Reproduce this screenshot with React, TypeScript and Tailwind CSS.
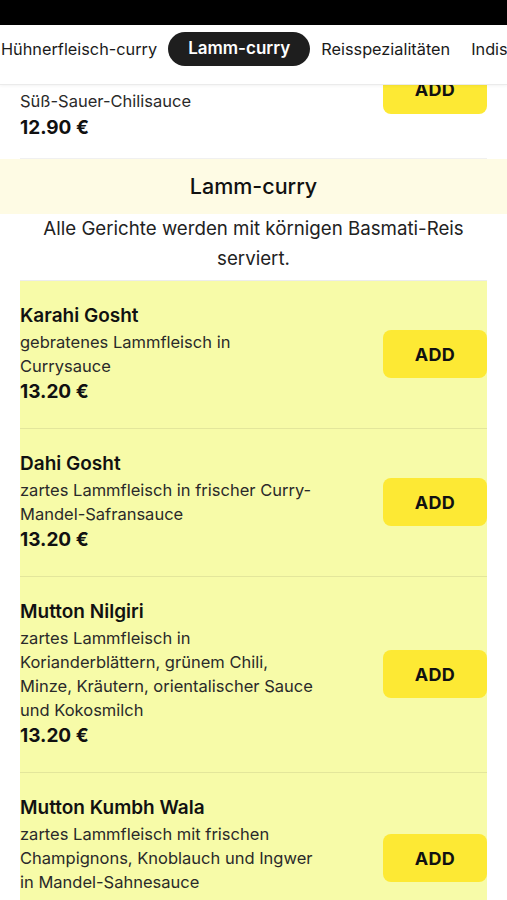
import React from 'react';

interface Dish {
    name: string;
    description: string;
    price: string;
}

const tabs = ['Hühnerfleisch-curry', 'Lamm-curry', 'Reisspezialitäten', 'Indische Brote'];

const dishes: Dish[] = [
    { name: 'Karahi Gosht', description: 'gebratenes Lammfleisch in Currysauce', price: '13.20 €' },
    { name: 'Dahi Gosht', description: 'zartes Lammfleisch in frischer Curry-Mandel-Safransauce', price: '13.20 €' },
    {
        name: 'Mutton Nilgiri',
        description: 'zartes Lammfleisch in Korianderblättern, grünem Chili, Minze, Kräutern, orientalischer Sauce und Kokosmilch',
        price: '13.20 €'
    },
    {
        name: 'Mutton Kumbh Wala',
        description: 'zartes Lammfleisch mit frischen Champignons, Knoblauch und Ingwer in Mandel-Sahnesauce',
        price: '13.20 €'
    }
];

const AddButton: React.FC = () => (
    <button className="w-[104px] h-[48px] shrink-0 rounded-[8px] bg-[#fde934] text-[18px] font-bold text-[#111] tracking-[0.3px]">
        ADD
    </button>
);

const DishRow: React.FC<{ dish: Dish }> = ({ dish }) => (
    <div className="flex items-center justify-between pt-[21px] pb-[22px] border-b border-[#e3e69b]">
        <div className="flex flex-col w-[300px]">
            <span className="text-[19px] font-semibold leading-[28px] text-[#111]">{dish.name}</span>
            <span className="text-[16.5px] leading-[24px] text-[#2a2a2a]">{dish.description}</span>
            <span className="text-[19px] font-bold leading-[28px] text-[#111]">{dish.price}</span>
        </div>
        <AddButton />
    </div>
);

export default function App() {
    return (
        <div className="w-[507px] h-[900px] overflow-hidden bg-white flex flex-col font-['Inter','Liberation_Sans',sans-serif]">
            {/* status bar */}
            <div className="h-[25px] shrink-0 bg-black" />

            {/* category tabs */}
            <nav className="h-[60px] shrink-0 relative z-10 bg-white border-b border-[#ebebeb] shadow-[0_1px_3px_rgba(0,0,0,0.05)] overflow-hidden flex items-start pt-[7px]">
                <div className="flex items-center gap-[1px] ml-[-9px] whitespace-nowrap">
                    {tabs.map((tab) => (
                        <span
                            key={tab}
                            className={
                                tab === 'Lamm-curry'
                                    ? 'h-[34px] px-5 rounded-full bg-[#1e1e1e] text-white text-[17px] font-semibold flex items-center'
                                    : 'h-[34px] px-[10px] text-[#1a1a1a] text-[16.3px] flex items-center'
                            }
                        >
                            {tab}
                        </span>
                    ))}
                </div>
            </nav>

            <main className="flex-1 overflow-hidden">
                {/* end of the previous section, scrolled mostly out of view */}
                <div className="mx-5 h-[138px] mt-[-64px] flex items-center justify-between border-b border-[#f0f0f0]">
                    <div className="self-end pb-[16px] flex flex-col">
                        <span className="text-[16.5px] leading-[24.7px] text-[#2a2a2a]">Süß-Sauer-Chilisauce</span>
                        <span className="text-[19px] font-bold leading-[28px] text-[#111]">12.90 €</span>
                    </div>
                    <AddButton />
                </div>

                <div className="h-[55px] bg-[#fefbe4] flex items-center justify-center">
                    <h2 className="text-[21.5px] font-medium text-[#111]">Lamm-curry</h2>
                </div>
                <p className="px-10 pb-[6px] text-center text-[18.7px] leading-[30px] text-[#222]">
                    Alle Gerichte werden mit körnigen Basmati-Reis serviert.
                </p>

                <div className="mx-5 border-t border-[#ececec] bg-[#f7fba8]">
                    {dishes.map((dish) => (
                        <DishRow key={dish.name} dish={dish} />
                    ))}
                </div>
            </main>
        </div>
    );
}
